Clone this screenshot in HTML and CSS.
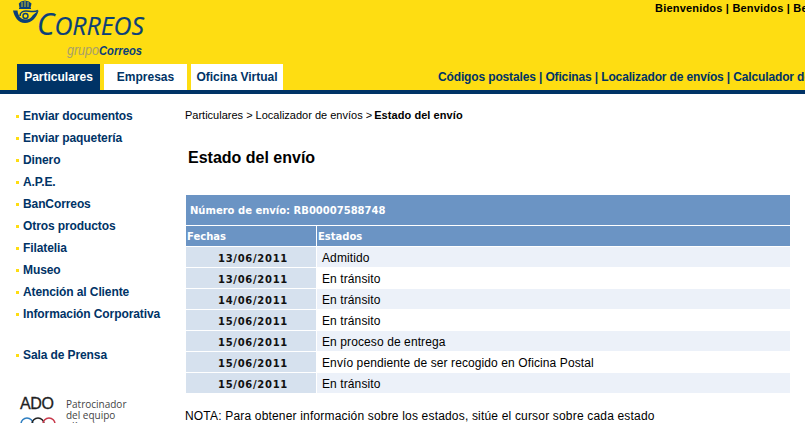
FILE: index.html
```html
<!DOCTYPE html>
<html lang="es">
<head>
<meta charset="utf-8">
<title>Estado del envío</title>
<link rel="stylesheet" href="styles.css">
</head>
<body>
<header class="header">
  <div class="brand">
    <svg class="logo" width="150" height="64" viewBox="0 0 150 64">
      <g fill="#0b3f78">
        <path d="M19.500 8 L18.800 3.500 L21 1.500 L25 0.500 L29 1.500 L31.500 3.500 L30.500 8 Z"/>
        <path d="M13 10.500 L17.500 10.500 C18 15 20 19.500 25.500 19.500 C29 19.500 31 18 33 15 L38.500 10.500 C37 17 32 23 25 23 C18 23 14.500 17 13 10.500 Z"/>
      </g>
      <g stroke="#fedd12" stroke-width="0.800">
        <path d="M22 2 V7 M25 1 V7 M28 2 V7"/>
      </g>
      <rect x="19" y="8" width="12" height="1" fill="#0b3f78"/>
      <g fill="none" stroke="#0b3f78">
        <path d="M20 16 C20 12 24 11 26 11 C29 11 35 12.500 38 10.500" stroke-width="1.600"/>
        <circle cx="25.500" cy="16" r="2.500" stroke-width="1.400"/>
      </g>
      <text class="logo-word" x="37" y="35" textLength="107" lengthAdjust="spacingAndGlyphs"><tspan class="logo-c">C</tspan>ORREOS</text>
      <text class="logo-grupo" x="67" y="55" textLength="32" lengthAdjust="spacingAndGlyphs">grupo</text>
      <text class="logo-correos" x="99" y="55" textLength="43" lengthAdjust="spacingAndGlyphs">Correos</text>
    </svg>
    <nav class="tabs">
      <a class="tab tab-active">Particulares</a>
      <a class="tab tab-business">Empresas</a>
      <a class="tab tab-office">Oficina Virtual</a>
    </nav>
  </div>
  <div class="welcome">Bienvenidos | Benvidos | Benvinguts | Ongi etorri</div>
  <div class="tools">Códigos postales | Oficinas | Localizador de envíos | Calculador de tarifas</div>
</header>
<div class="page">
  <aside class="side">
    <ul class="menu">
      <li>Enviar documentos</li>
      <li>Enviar paquetería</li>
      <li>Dinero</li>
      <li>A.P.E.</li>
      <li>BanCorreos</li>
      <li>Otros productos</li>
      <li>Filatelia</li>
      <li>Museo</li>
      <li>Atención al Cliente</li>
      <li>Información Corporativa</li>
    </ul>
    <ul class="menu menu-press">
      <li>Sala de Prensa</li>
    </ul>
    <div class="sponsor">
      <div class="ado">
        <span class="ado-word">ADO</span>
        <svg class="rings" width="36" height="16" viewBox="0 0 36 16">
          <g fill="none" stroke-width="1.500">
            <circle cx="7" cy="8" r="6" stroke="#2f7fc1"/>
            <circle cx="18" cy="8" r="6" stroke="#222"/>
            <circle cx="29" cy="8" r="6" stroke="#c8384a"/>
          </g>
        </svg>
      </div>
      <p class="sponsor-text">Patrocinador<br>del equipo<br>olímpico</p>
    </div>
  </aside>
  <main class="main">
    <p class="crumbs">Particulares &gt; Localizador de envíos &gt; <b class="crumb-now">Estado del envío</b></p>
    <h1 class="title">Estado del envío</h1>
    <table class="track">
      <colgroup><col class="col-date"><col></colgroup>
      <thead>
        <tr><th colspan="2" class="num">Número de envío: RB00007588748</th></tr>
        <tr class="heads"><th class="c1">Fechas</th><th>Estados</th></tr>
      </thead>
      <tbody>
        <tr class="odd"><td class="date">13/06/2011</td><td class="state">Admitido</td></tr>
        <tr><td class="date">13/06/2011</td><td class="state">En tránsito</td></tr>
        <tr class="odd"><td class="date">14/06/2011</td><td class="state">En tránsito</td></tr>
        <tr><td class="date">15/06/2011</td><td class="state">En tránsito</td></tr>
        <tr class="odd"><td class="date">15/06/2011</td><td class="state">En proceso de entrega</td></tr>
        <tr><td class="date">15/06/2011</td><td class="state">Envío pendiente de ser recogido en Oficina Postal</td></tr>
        <tr class="odd"><td class="date">15/06/2011</td><td class="state">En tránsito</td></tr>
      </tbody>
    </table>
    <p class="note">NOTA: Para obtener información sobre los estados, sitúe el cursor sobre cada estado</p>
  </main>
</div>
</body>
</html>
```
FILE: styles.css
```css
html, body {
  margin: 0;
  height: 423px;
  overflow: hidden;
  background: #fff;
  font-family: "Liberation Sans", Arial, sans-serif;
  font-size: 12px;
  color: #000;
}
.header {
  height: 90px;
  background: #fedd12;
  border-bottom: 4px solid #003366;
  display: grid;
  grid-template-columns: 400px 405px;
  grid-template-rows: 64px 26px;
  overflow: hidden;
  width: 805px;
}
.brand {
  grid-column: 1;
  grid-row: 1 / 3;
  display: flex;
  flex-direction: column;
}
.logo { display: block; height: 64px; flex: none; }
.logo-word {
  font: italic 400 26px "Open Sans", sans-serif;
  fill: #0b3f78;
  stroke: #0b3f78;
  stroke-width: 0.2px;
}
.logo-c { font-size: 31px; }
.logo-grupo {
  font: italic 400 14px "Liberation Sans", sans-serif;
  fill: #a8a06a;
}
.logo-correos {
  font: italic 700 13px "Liberation Sans", sans-serif;
  fill: #0b3f78;
}
.tabs {
  display: flex;
  gap: 4px;
  padding-left: 17px;
  height: 26px;
}
.tab {
  background: #fff;
  color: #003366;
  font-weight: 700;
  text-align: center;
  line-height: 26px;
  width: 83px;
}
.tab-office { width: 92px; }
.tab-active { background: #003366; color: #fff; }
.welcome {
  grid-column: 2;
  grid-row: 1;
  white-space: nowrap;
  font-size: 11px;
  font-weight: 700;
  letter-spacing: 0.2px;
  padding: 2px 0 0 255px;
  line-height: 13px;
}
.tools {
  grid-column: 2;
  grid-row: 2;
  white-space: nowrap;
  font-weight: 700;
  color: #003366;
  letter-spacing: -0.14px;
  padding-left: 38px;
  line-height: 26px;
}
.page {
  display: grid;
  grid-template-columns: 185px 605px;
}
.side { padding-top: 12px; }
.menu {
  list-style: none;
  margin: 0;
  padding: 0 0 0 23px;
}
.menu li {
  position: relative;
  height: 22px;
  line-height: 20px;
  font-weight: 700;
  color: #003366;
  letter-spacing: -0.1px;
  white-space: nowrap;
}
.menu li::before {
  content: "";
  position: absolute;
  left: -7px;
  top: 9px;
  width: 3px;
  height: 3px;
  background: #fedd12;
}
.menu-press { margin-top: 19px; }
.sponsor {
  display: flex;
  gap: 10px;
  margin: 29px 0 0 20px;
}
.ado { width: 36px; }
.ado-word {
  display: block;
  font-size: 16px;
  line-height: 15px;
  letter-spacing: -0.4px;
  color: #222;
  -webkit-text-stroke: 0.3px #222;
}
.rings { display: block; margin-top: 5px; }
.sponsor-text {
  margin: 3px 0 0;
  font: 10px/11px "Open Sans", sans-serif;
  color: #444;
}
.crumbs {
  margin: 0;
  padding-top: 15px;
  font-size: 11px;
  line-height: 13px;
}
.crumb-now { letter-spacing: 0.07px; margin-left: -1px; }
.title {
  margin: 27px 0 0 3px;
  font-size: 16px;
  line-height: 18px;
  font-weight: 700;
}
.track {
  margin: 28px 0 0 1px;
  width: 604px;
  border-collapse: separate;
  border-spacing: 0;
  table-layout: fixed;
}
.col-date { width: 131px; }
.track th {
  background: #6b94c4;
  color: #fff;
  font: 700 10px "DejaVu Sans", Verdana, sans-serif;
  text-align: left;
  padding: 0 1px;
  border-bottom: 1px solid #fff;
}
.track .num { height: 30px; padding-left: 4px; }
.heads th { padding-top: 1px; box-sizing: content-box; height: 19px; }
.track .c1 { border-right: 1px solid #fff; }
.track td { padding: 1px 0 0; height: 19px; border-bottom: 1px solid #fff; }
.date {
  background: #d6e1ee;
  font: 700 10px "DejaVu Sans", Verdana, sans-serif;
  letter-spacing: 0.7px;
  text-align: center;
  border-right: 1px solid #fff;
  color: #111;
}
.track td.date { padding: 3px 0 0 4px; height: 17px; }
.track .state { padding-left: 5px; letter-spacing: 0.1px; }
.odd .state { background: #ecf1f9; }
.note { margin: 15px 0 0; line-height: 14px; letter-spacing: 0.18px; }
```
